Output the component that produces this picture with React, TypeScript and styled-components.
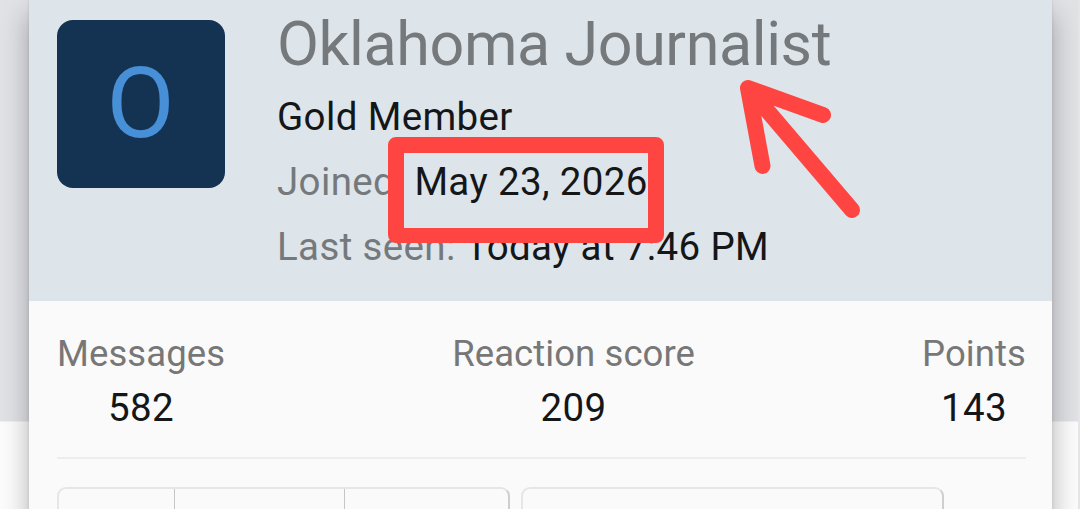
import styled, { createGlobalStyle } from "styled-components";

const GlobalStyle = createGlobalStyle`
	* {
		box-sizing: border-box;
	}
	body {
		margin: 0;
		font-family: Roboto, "Liberation Sans", sans-serif;
		color: #141618;
		overflow: hidden;
	}
	h1, p, dl, dt, dd {
		margin: 0;
		font-weight: 400;
	}
`;

const Page = styled.div`
	position: relative;
	height: 509px;
	padding: 0 28px 0 29px;
	overflow: hidden;
	background: linear-gradient(#e1e2e6 421px, #fcfcfc 422px);
	border-right: 2px solid #e4e5e7;
`;

const Card = styled.section`
	width: 1023px;
	height: 580px;
	background: #fafafa;
	box-shadow: 0 14px 26px rgba(0, 0, 0, 0.3), 0 0 3px rgba(0, 0, 0, 0.12);
`;

const CardHeader = styled.header`
	display: flex;
	gap: 52px;
	height: 301px;
	padding: 4px 28px 0;
	background: #dde5eb;
`;

const Avatar = styled.div`
	display: flex;
	align-items: center;
	justify-content: center;
	flex: none;
	width: 168px;
	height: 168px;
	margin-top: 16px;
	border-radius: 16px;
	background: #143352;
	color: #478fd6;
	font-size: 99px;
	line-height: 168px;
	padding: 0 1px 3px 0;
`;

const UserName = styled.h1`
	font-size: 61px;
	line-height: 80px;
	letter-spacing: -0.4px;
	color: #75797c;
	white-space: nowrap;
`;

const InfoRow = styled.p`
	font-size: 38.5px;
	line-height: 65px;
	letter-spacing: 0.37px;
	white-space: nowrap;
`;

const InfoLabel = styled.span`
	margin-right: 9.5px;
	color: #75797c;
`;

const StatList = styled.dl`
	display: flex;
	justify-content: space-between;
	height: 158px;
	margin: 0 26px 0 28px;
	padding-top: 26px;
	border-bottom: 2px solid #ededee;
	text-align: center;
`;

const StatLabel = styled.dt`
	font-size: 36.5px;
	line-height: 54px;
	letter-spacing: 0.08px;
	color: #777;
`;

const StatValue = styled.dd`
	font-size: 38.5px;
	line-height: 54px;
	letter-spacing: 0.37px;
`;

const ButtonRow = styled.div`
	display: flex;
	gap: 11px;
	margin: 28px 28px 0;
`;

const ButtonGroup = styled.div<{ $width: number }>`
	display: flex;
	width: ${({ $width }) => $width}px;
	height: 70px;
	border: 2px solid #e6e6e7;
	border-right-color: #cfcfd0;
	border-radius: 9px;
`;

const ButtonCell = styled.div<{ $width?: number }>`
	flex: ${({ $width }) => ($width ? `0 0 ${$width}px` : "1")};
	&:not(:last-child) {
		border-right: 1px solid #c6c6c7;
	}
`;

const DateFrame = styled.div`
	position: absolute;
	top: 137px;
	left: 388px;
	width: 276px;
	height: 106px;
	border: 16px solid #ff4542;
	border-bottom-width: 15px;
	border-radius: 8px;
`;

const Arrow = styled.svg`
	position: absolute;
	top: 70px;
	left: 730px;
`;

const stats = [
	{ label: "Messages", value: 582 },
	{ label: "Reaction score", value: 209 },
	{ label: "Points", value: 143 },
];

export default function App() {
	return (
		<Page>
			<GlobalStyle />
			<Card>
				<CardHeader>
					<Avatar>O</Avatar>
					<div>
						<UserName>Oklahoma Journalist</UserName>
						<InfoRow>Gold Member</InfoRow>
						<InfoRow><InfoLabel>Joined:</InfoLabel>May 23, 2026</InfoRow>
						<InfoRow><InfoLabel>Last seen:</InfoLabel>Today at 7:46 PM</InfoRow>
					</div>
				</CardHeader>
				<StatList>
					{stats.map((item) => (
						<div key={item.label}>
							<StatLabel>{item.label}</StatLabel>
							<StatValue>{item.value}</StatValue>
						</div>
					))}
				</StatList>
				<ButtonRow>
					<ButtonGroup $width={453}>
						<ButtonCell $width={116} />
						<ButtonCell $width={170} />
						<ButtonCell />
					</ButtonGroup>
					<ButtonGroup $width={423} />
				</ButtonRow>
			</Card>
			<DateFrame />
			<Arrow width="140" height="160" viewBox="0 0 140 160" fill="none" stroke="#ff4542" strokeWidth="16" strokeLinecap="round" strokeLinejoin="round">
				<path d="M93 45L18 18L32.500 96M18 18L122 140" />
			</Arrow>
		</Page>
	);
}
